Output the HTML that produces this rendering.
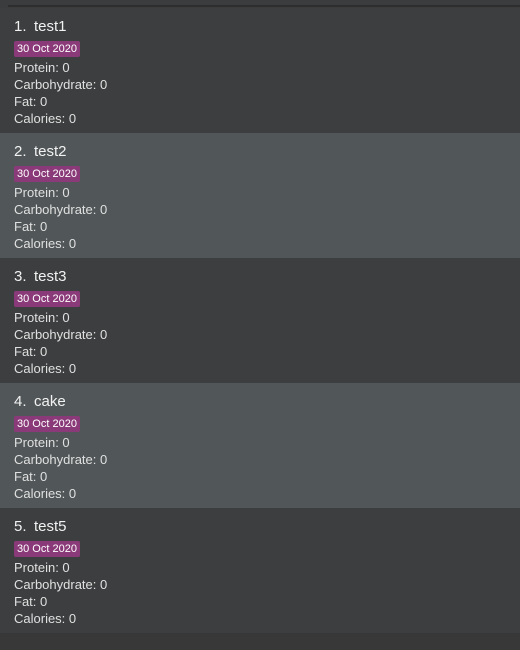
<!DOCTYPE html>
<html><head><meta charset="utf-8"><style>
*{margin:0;padding:0;box-sizing:border-box}
html,body{width:520px;height:650px;overflow:hidden;background:#383838;font-family:"Liberation Sans",sans-serif;color:#e6e6e6}
.top{height:8px;background:#3a3c3d;position:relative}
.top:after{content:"";position:absolute;left:8px;right:0;top:5px;height:2px;background:#2e2e2e}
.card{height:125px;background:#3c3e3f;padding:9px 0 0 14px;position:relative}
.card.alt{background:#515658}
.t{font-size:15px;color:#f2f2f2;height:22px;line-height:20px}
.t span{display:inline-block;width:20px}
.d{display:inline-block;background:#8a3a78;color:#fff;font-size:11px;line-height:16px;padding:0 3px;border-radius:2px;margin-top:2px;margin-bottom:2px;vertical-align:top}
.l{font-size:13px;line-height:17px;color:#e0e0e0}
</style></head><body>
<div class="top"></div>
<div class="card"><div class="t"><span>1.</span>test1</div><div class="d">30 Oct 2020</div><div class="l">Protein: 0</div><div class="l">Carbohydrate: 0</div><div class="l">Fat: 0</div><div class="l">Calories: 0</div></div>
<div class="card alt"><div class="t"><span>2.</span>test2</div><div class="d">30 Oct 2020</div><div class="l">Protein: 0</div><div class="l">Carbohydrate: 0</div><div class="l">Fat: 0</div><div class="l">Calories: 0</div></div>
<div class="card"><div class="t"><span>3.</span>test3</div><div class="d">30 Oct 2020</div><div class="l">Protein: 0</div><div class="l">Carbohydrate: 0</div><div class="l">Fat: 0</div><div class="l">Calories: 0</div></div>
<div class="card alt"><div class="t"><span>4.</span>cake</div><div class="d">30 Oct 2020</div><div class="l">Protein: 0</div><div class="l">Carbohydrate: 0</div><div class="l">Fat: 0</div><div class="l">Calories: 0</div></div>
<div class="card"><div class="t"><span>5.</span>test5</div><div class="d">30 Oct 2020</div><div class="l">Protein: 0</div><div class="l">Carbohydrate: 0</div><div class="l">Fat: 0</div><div class="l">Calories: 0</div></div>
</body></html>
